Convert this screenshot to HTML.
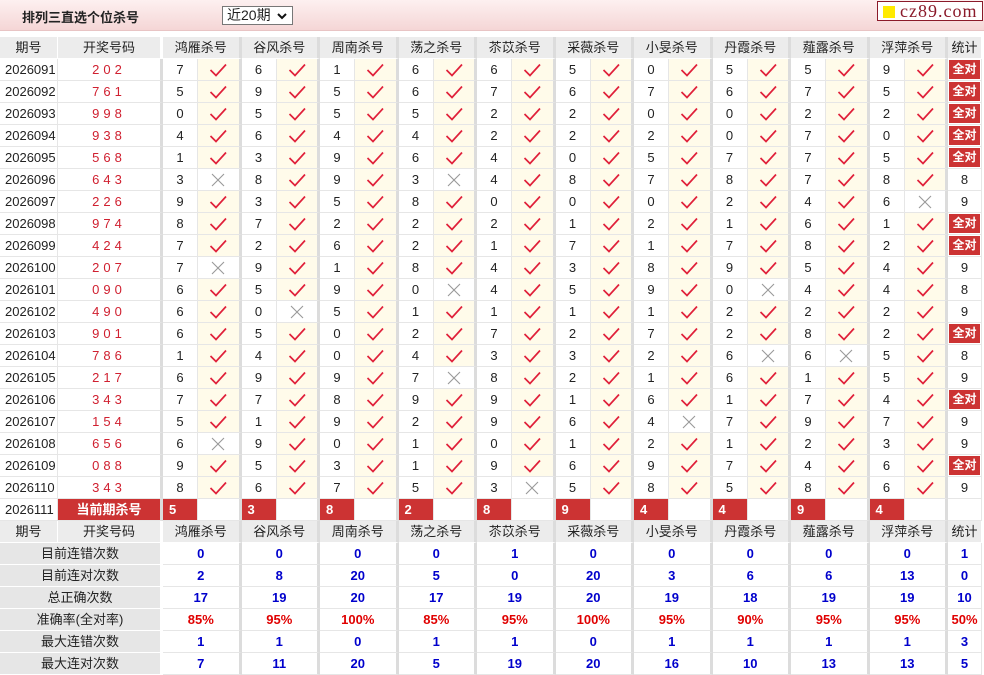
<!DOCTYPE html>
<html><head><meta charset="utf-8">
<style>
*{margin:0;padding:0;box-sizing:border-box}
body{width:984px;height:675px;overflow:hidden;background:#fff;font-family:"Liberation Sans","Noto Sans CJK SC",sans-serif;font-size:13px;color:#222;position:relative}
.top{position:absolute;left:0;top:0;width:984px;height:31px;background:linear-gradient(#fdf0f0,#f5d6d6);border-bottom:1px solid #e8c4c4}
.title{position:absolute;left:22px;top:7px;font-weight:bold;font-size:13px;color:#222}
.sel{position:absolute;left:222px;top:6px;width:71px;height:19px;border:1px solid #777;background:#fff;font-size:14px;padding-left:4px;line-height:17px}
.sel svg{position:absolute;right:5px;top:6px}
.logo{position:absolute;left:877px;top:1px;width:106px;height:20px;border:1px solid #8b1a2a;background:#fff;font-family:"Liberation Serif",serif;font-size:18px;color:#8b1a2a;line-height:18px;padding-left:22px;letter-spacing:1px}
.logo:before{content:"";position:absolute;left:5px;top:4px;width:12px;height:12px;background:#ffea00}
.tb{position:absolute;left:0;top:37px;width:984px}
.r{display:grid;grid-template-columns:58px 105px repeat(10,35px 43.5px) 34px;height:22px}
.r i{font-style:normal;display:block;height:22px;line-height:21px;text-align:center;border-right:1px solid #e6e6e6;border-bottom:1px solid #e6e6e6;overflow:hidden;white-space:nowrap}
.r i:first-child{text-align:left;padding-left:5px}
.r i.k{color:#d02030;letter-spacing:4px;border-right:3px solid #dcdcdc}
.r i.c,.r i.x{border-right:3px solid #dcdcdc}
.r i.c{background:#fffbea}
.r i svg{display:inline-block;vertical-align:middle;margin-top:-2px}
.h i{background:#ececec;border-color:#fff!important;border-right-width:1px}
.h i.g{grid-column:span 2;border-right:3px solid #dcdcdc!important;background:#ececec}
.h i:first-child{text-align:center;padding:0}
.q{background:#cc3333;color:#fff;font-weight:bold;font-size:12px;box-shadow:inset 0 0 0 1px #fff}
.cur i.kk{background:#cc3333;color:#fff;font-weight:bold;border-right:3px solid #dcdcdc}
.cur i.m{background:#cc3333;color:#fff;font-weight:bold;text-align:left;padding-left:6px}
.s i{color:#0000cc;font-weight:bold;grid-column:span 2;border-right:3px solid #dcdcdc}
.s i:first-child{grid-column:span 2;background:#e6e6e6;color:#222;font-weight:normal;text-align:center;padding:0;border-color:#fff}
.s i:last-child{grid-column:span 1;border-right:1px solid #e6e6e6}
.p i{color:#e00000}
</style></head><body>
<svg width="0" height="0" style="position:absolute"><defs>
<symbol id="v" viewBox="0 0 20 16"><polyline points="2.5,8 8,13.5 18,2.5" fill="none" stroke="#e0203a" stroke-width="1.7"/></symbol>
<symbol id="w" viewBox="0 0 16 16"><path d="M2 2L14 14M14 2L2 14" stroke="#999" stroke-width="1.1" fill="none"/></symbol>
</defs></svg>
<div class="top"><div class="title">排列三直选个位杀号</div><div class="sel">近20期<svg width="10" height="7"><polyline points="1,1 5,5 9,1" fill="none" stroke="#111" stroke-width="2"/></svg></div><div class="logo">cz89.com</div></div>
<div class="tb">
<div class="r h"><i>期号</i><i style="border-right:3px solid #dcdcdc">开奖号码</i><i class="g">鸿雁杀号</i><i class="g">谷风杀号</i><i class="g">周南杀号</i><i class="g">荡之杀号</i><i class="g">苶苡杀号</i><i class="g">采薇杀号</i><i class="g">小旻杀号</i><i class="g">丹霞杀号</i><i class="g">薤露杀号</i><i class="g">浮萍杀号</i><i>统计</i></div>

<div class="r"><i>2026091</i><i class="k">202</i><i>7</i><i class="c"><svg width="20" height="16"><use href="#v"/></svg></i><i>6</i><i class="c"><svg width="20" height="16"><use href="#v"/></svg></i><i>1</i><i class="c"><svg width="20" height="16"><use href="#v"/></svg></i><i>6</i><i class="c"><svg width="20" height="16"><use href="#v"/></svg></i><i>6</i><i class="c"><svg width="20" height="16"><use href="#v"/></svg></i><i>5</i><i class="c"><svg width="20" height="16"><use href="#v"/></svg></i><i>0</i><i class="c"><svg width="20" height="16"><use href="#v"/></svg></i><i>5</i><i class="c"><svg width="20" height="16"><use href="#v"/></svg></i><i>5</i><i class="c"><svg width="20" height="16"><use href="#v"/></svg></i><i>9</i><i class="c"><svg width="20" height="16"><use href="#v"/></svg></i><i class="q">全对</i></div>

<div class="r"><i>2026092</i><i class="k">761</i><i>5</i><i class="c"><svg width="20" height="16"><use href="#v"/></svg></i><i>9</i><i class="c"><svg width="20" height="16"><use href="#v"/></svg></i><i>5</i><i class="c"><svg width="20" height="16"><use href="#v"/></svg></i><i>6</i><i class="c"><svg width="20" height="16"><use href="#v"/></svg></i><i>7</i><i class="c"><svg width="20" height="16"><use href="#v"/></svg></i><i>6</i><i class="c"><svg width="20" height="16"><use href="#v"/></svg></i><i>7</i><i class="c"><svg width="20" height="16"><use href="#v"/></svg></i><i>6</i><i class="c"><svg width="20" height="16"><use href="#v"/></svg></i><i>7</i><i class="c"><svg width="20" height="16"><use href="#v"/></svg></i><i>5</i><i class="c"><svg width="20" height="16"><use href="#v"/></svg></i><i class="q">全对</i></div>

<div class="r"><i>2026093</i><i class="k">998</i><i>0</i><i class="c"><svg width="20" height="16"><use href="#v"/></svg></i><i>5</i><i class="c"><svg width="20" height="16"><use href="#v"/></svg></i><i>5</i><i class="c"><svg width="20" height="16"><use href="#v"/></svg></i><i>5</i><i class="c"><svg width="20" height="16"><use href="#v"/></svg></i><i>2</i><i class="c"><svg width="20" height="16"><use href="#v"/></svg></i><i>2</i><i class="c"><svg width="20" height="16"><use href="#v"/></svg></i><i>0</i><i class="c"><svg width="20" height="16"><use href="#v"/></svg></i><i>0</i><i class="c"><svg width="20" height="16"><use href="#v"/></svg></i><i>2</i><i class="c"><svg width="20" height="16"><use href="#v"/></svg></i><i>2</i><i class="c"><svg width="20" height="16"><use href="#v"/></svg></i><i class="q">全对</i></div>

<div class="r"><i>2026094</i><i class="k">938</i><i>4</i><i class="c"><svg width="20" height="16"><use href="#v"/></svg></i><i>6</i><i class="c"><svg width="20" height="16"><use href="#v"/></svg></i><i>4</i><i class="c"><svg width="20" height="16"><use href="#v"/></svg></i><i>4</i><i class="c"><svg width="20" height="16"><use href="#v"/></svg></i><i>2</i><i class="c"><svg width="20" height="16"><use href="#v"/></svg></i><i>2</i><i class="c"><svg width="20" height="16"><use href="#v"/></svg></i><i>2</i><i class="c"><svg width="20" height="16"><use href="#v"/></svg></i><i>0</i><i class="c"><svg width="20" height="16"><use href="#v"/></svg></i><i>7</i><i class="c"><svg width="20" height="16"><use href="#v"/></svg></i><i>0</i><i class="c"><svg width="20" height="16"><use href="#v"/></svg></i><i class="q">全对</i></div>

<div class="r"><i>2026095</i><i class="k">568</i><i>1</i><i class="c"><svg width="20" height="16"><use href="#v"/></svg></i><i>3</i><i class="c"><svg width="20" height="16"><use href="#v"/></svg></i><i>9</i><i class="c"><svg width="20" height="16"><use href="#v"/></svg></i><i>6</i><i class="c"><svg width="20" height="16"><use href="#v"/></svg></i><i>4</i><i class="c"><svg width="20" height="16"><use href="#v"/></svg></i><i>0</i><i class="c"><svg width="20" height="16"><use href="#v"/></svg></i><i>5</i><i class="c"><svg width="20" height="16"><use href="#v"/></svg></i><i>7</i><i class="c"><svg width="20" height="16"><use href="#v"/></svg></i><i>7</i><i class="c"><svg width="20" height="16"><use href="#v"/></svg></i><i>5</i><i class="c"><svg width="20" height="16"><use href="#v"/></svg></i><i class="q">全对</i></div>

<div class="r"><i>2026096</i><i class="k">643</i><i>3</i><i class="x"><svg width="16" height="16"><use href="#w"/></svg></i><i>8</i><i class="c"><svg width="20" height="16"><use href="#v"/></svg></i><i>9</i><i class="c"><svg width="20" height="16"><use href="#v"/></svg></i><i>3</i><i class="x"><svg width="16" height="16"><use href="#w"/></svg></i><i>4</i><i class="c"><svg width="20" height="16"><use href="#v"/></svg></i><i>8</i><i class="c"><svg width="20" height="16"><use href="#v"/></svg></i><i>7</i><i class="c"><svg width="20" height="16"><use href="#v"/></svg></i><i>8</i><i class="c"><svg width="20" height="16"><use href="#v"/></svg></i><i>7</i><i class="c"><svg width="20" height="16"><use href="#v"/></svg></i><i>8</i><i class="c"><svg width="20" height="16"><use href="#v"/></svg></i><i>8</i></div>

<div class="r"><i>2026097</i><i class="k">226</i><i>9</i><i class="c"><svg width="20" height="16"><use href="#v"/></svg></i><i>3</i><i class="c"><svg width="20" height="16"><use href="#v"/></svg></i><i>5</i><i class="c"><svg width="20" height="16"><use href="#v"/></svg></i><i>8</i><i class="c"><svg width="20" height="16"><use href="#v"/></svg></i><i>0</i><i class="c"><svg width="20" height="16"><use href="#v"/></svg></i><i>0</i><i class="c"><svg width="20" height="16"><use href="#v"/></svg></i><i>0</i><i class="c"><svg width="20" height="16"><use href="#v"/></svg></i><i>2</i><i class="c"><svg width="20" height="16"><use href="#v"/></svg></i><i>4</i><i class="c"><svg width="20" height="16"><use href="#v"/></svg></i><i>6</i><i class="x"><svg width="16" height="16"><use href="#w"/></svg></i><i>9</i></div>

<div class="r"><i>2026098</i><i class="k">974</i><i>8</i><i class="c"><svg width="20" height="16"><use href="#v"/></svg></i><i>7</i><i class="c"><svg width="20" height="16"><use href="#v"/></svg></i><i>2</i><i class="c"><svg width="20" height="16"><use href="#v"/></svg></i><i>2</i><i class="c"><svg width="20" height="16"><use href="#v"/></svg></i><i>2</i><i class="c"><svg width="20" height="16"><use href="#v"/></svg></i><i>1</i><i class="c"><svg width="20" height="16"><use href="#v"/></svg></i><i>2</i><i class="c"><svg width="20" height="16"><use href="#v"/></svg></i><i>1</i><i class="c"><svg width="20" height="16"><use href="#v"/></svg></i><i>6</i><i class="c"><svg width="20" height="16"><use href="#v"/></svg></i><i>1</i><i class="c"><svg width="20" height="16"><use href="#v"/></svg></i><i class="q">全对</i></div>

<div class="r"><i>2026099</i><i class="k">424</i><i>7</i><i class="c"><svg width="20" height="16"><use href="#v"/></svg></i><i>2</i><i class="c"><svg width="20" height="16"><use href="#v"/></svg></i><i>6</i><i class="c"><svg width="20" height="16"><use href="#v"/></svg></i><i>2</i><i class="c"><svg width="20" height="16"><use href="#v"/></svg></i><i>1</i><i class="c"><svg width="20" height="16"><use href="#v"/></svg></i><i>7</i><i class="c"><svg width="20" height="16"><use href="#v"/></svg></i><i>1</i><i class="c"><svg width="20" height="16"><use href="#v"/></svg></i><i>7</i><i class="c"><svg width="20" height="16"><use href="#v"/></svg></i><i>8</i><i class="c"><svg width="20" height="16"><use href="#v"/></svg></i><i>2</i><i class="c"><svg width="20" height="16"><use href="#v"/></svg></i><i class="q">全对</i></div>

<div class="r"><i>2026100</i><i class="k">207</i><i>7</i><i class="x"><svg width="16" height="16"><use href="#w"/></svg></i><i>9</i><i class="c"><svg width="20" height="16"><use href="#v"/></svg></i><i>1</i><i class="c"><svg width="20" height="16"><use href="#v"/></svg></i><i>8</i><i class="c"><svg width="20" height="16"><use href="#v"/></svg></i><i>4</i><i class="c"><svg width="20" height="16"><use href="#v"/></svg></i><i>3</i><i class="c"><svg width="20" height="16"><use href="#v"/></svg></i><i>8</i><i class="c"><svg width="20" height="16"><use href="#v"/></svg></i><i>9</i><i class="c"><svg width="20" height="16"><use href="#v"/></svg></i><i>5</i><i class="c"><svg width="20" height="16"><use href="#v"/></svg></i><i>4</i><i class="c"><svg width="20" height="16"><use href="#v"/></svg></i><i>9</i></div>

<div class="r"><i>2026101</i><i class="k">090</i><i>6</i><i class="c"><svg width="20" height="16"><use href="#v"/></svg></i><i>5</i><i class="c"><svg width="20" height="16"><use href="#v"/></svg></i><i>9</i><i class="c"><svg width="20" height="16"><use href="#v"/></svg></i><i>0</i><i class="x"><svg width="16" height="16"><use href="#w"/></svg></i><i>4</i><i class="c"><svg width="20" height="16"><use href="#v"/></svg></i><i>5</i><i class="c"><svg width="20" height="16"><use href="#v"/></svg></i><i>9</i><i class="c"><svg width="20" height="16"><use href="#v"/></svg></i><i>0</i><i class="x"><svg width="16" height="16"><use href="#w"/></svg></i><i>4</i><i class="c"><svg width="20" height="16"><use href="#v"/></svg></i><i>4</i><i class="c"><svg width="20" height="16"><use href="#v"/></svg></i><i>8</i></div>

<div class="r"><i>2026102</i><i class="k">490</i><i>6</i><i class="c"><svg width="20" height="16"><use href="#v"/></svg></i><i>0</i><i class="x"><svg width="16" height="16"><use href="#w"/></svg></i><i>5</i><i class="c"><svg width="20" height="16"><use href="#v"/></svg></i><i>1</i><i class="c"><svg width="20" height="16"><use href="#v"/></svg></i><i>1</i><i class="c"><svg width="20" height="16"><use href="#v"/></svg></i><i>1</i><i class="c"><svg width="20" height="16"><use href="#v"/></svg></i><i>1</i><i class="c"><svg width="20" height="16"><use href="#v"/></svg></i><i>2</i><i class="c"><svg width="20" height="16"><use href="#v"/></svg></i><i>2</i><i class="c"><svg width="20" height="16"><use href="#v"/></svg></i><i>2</i><i class="c"><svg width="20" height="16"><use href="#v"/></svg></i><i>9</i></div>

<div class="r"><i>2026103</i><i class="k">901</i><i>6</i><i class="c"><svg width="20" height="16"><use href="#v"/></svg></i><i>5</i><i class="c"><svg width="20" height="16"><use href="#v"/></svg></i><i>0</i><i class="c"><svg width="20" height="16"><use href="#v"/></svg></i><i>2</i><i class="c"><svg width="20" height="16"><use href="#v"/></svg></i><i>7</i><i class="c"><svg width="20" height="16"><use href="#v"/></svg></i><i>2</i><i class="c"><svg width="20" height="16"><use href="#v"/></svg></i><i>7</i><i class="c"><svg width="20" height="16"><use href="#v"/></svg></i><i>2</i><i class="c"><svg width="20" height="16"><use href="#v"/></svg></i><i>8</i><i class="c"><svg width="20" height="16"><use href="#v"/></svg></i><i>2</i><i class="c"><svg width="20" height="16"><use href="#v"/></svg></i><i class="q">全对</i></div>

<div class="r"><i>2026104</i><i class="k">786</i><i>1</i><i class="c"><svg width="20" height="16"><use href="#v"/></svg></i><i>4</i><i class="c"><svg width="20" height="16"><use href="#v"/></svg></i><i>0</i><i class="c"><svg width="20" height="16"><use href="#v"/></svg></i><i>4</i><i class="c"><svg width="20" height="16"><use href="#v"/></svg></i><i>3</i><i class="c"><svg width="20" height="16"><use href="#v"/></svg></i><i>3</i><i class="c"><svg width="20" height="16"><use href="#v"/></svg></i><i>2</i><i class="c"><svg width="20" height="16"><use href="#v"/></svg></i><i>6</i><i class="x"><svg width="16" height="16"><use href="#w"/></svg></i><i>6</i><i class="x"><svg width="16" height="16"><use href="#w"/></svg></i><i>5</i><i class="c"><svg width="20" height="16"><use href="#v"/></svg></i><i>8</i></div>

<div class="r"><i>2026105</i><i class="k">217</i><i>6</i><i class="c"><svg width="20" height="16"><use href="#v"/></svg></i><i>9</i><i class="c"><svg width="20" height="16"><use href="#v"/></svg></i><i>9</i><i class="c"><svg width="20" height="16"><use href="#v"/></svg></i><i>7</i><i class="x"><svg width="16" height="16"><use href="#w"/></svg></i><i>8</i><i class="c"><svg width="20" height="16"><use href="#v"/></svg></i><i>2</i><i class="c"><svg width="20" height="16"><use href="#v"/></svg></i><i>1</i><i class="c"><svg width="20" height="16"><use href="#v"/></svg></i><i>6</i><i class="c"><svg width="20" height="16"><use href="#v"/></svg></i><i>1</i><i class="c"><svg width="20" height="16"><use href="#v"/></svg></i><i>5</i><i class="c"><svg width="20" height="16"><use href="#v"/></svg></i><i>9</i></div>

<div class="r"><i>2026106</i><i class="k">343</i><i>7</i><i class="c"><svg width="20" height="16"><use href="#v"/></svg></i><i>7</i><i class="c"><svg width="20" height="16"><use href="#v"/></svg></i><i>8</i><i class="c"><svg width="20" height="16"><use href="#v"/></svg></i><i>9</i><i class="c"><svg width="20" height="16"><use href="#v"/></svg></i><i>9</i><i class="c"><svg width="20" height="16"><use href="#v"/></svg></i><i>1</i><i class="c"><svg width="20" height="16"><use href="#v"/></svg></i><i>6</i><i class="c"><svg width="20" height="16"><use href="#v"/></svg></i><i>1</i><i class="c"><svg width="20" height="16"><use href="#v"/></svg></i><i>7</i><i class="c"><svg width="20" height="16"><use href="#v"/></svg></i><i>4</i><i class="c"><svg width="20" height="16"><use href="#v"/></svg></i><i class="q">全对</i></div>

<div class="r"><i>2026107</i><i class="k">154</i><i>5</i><i class="c"><svg width="20" height="16"><use href="#v"/></svg></i><i>1</i><i class="c"><svg width="20" height="16"><use href="#v"/></svg></i><i>9</i><i class="c"><svg width="20" height="16"><use href="#v"/></svg></i><i>2</i><i class="c"><svg width="20" height="16"><use href="#v"/></svg></i><i>9</i><i class="c"><svg width="20" height="16"><use href="#v"/></svg></i><i>6</i><i class="c"><svg width="20" height="16"><use href="#v"/></svg></i><i>4</i><i class="x"><svg width="16" height="16"><use href="#w"/></svg></i><i>7</i><i class="c"><svg width="20" height="16"><use href="#v"/></svg></i><i>9</i><i class="c"><svg width="20" height="16"><use href="#v"/></svg></i><i>7</i><i class="c"><svg width="20" height="16"><use href="#v"/></svg></i><i>9</i></div>

<div class="r"><i>2026108</i><i class="k">656</i><i>6</i><i class="x"><svg width="16" height="16"><use href="#w"/></svg></i><i>9</i><i class="c"><svg width="20" height="16"><use href="#v"/></svg></i><i>0</i><i class="c"><svg width="20" height="16"><use href="#v"/></svg></i><i>1</i><i class="c"><svg width="20" height="16"><use href="#v"/></svg></i><i>0</i><i class="c"><svg width="20" height="16"><use href="#v"/></svg></i><i>1</i><i class="c"><svg width="20" height="16"><use href="#v"/></svg></i><i>2</i><i class="c"><svg width="20" height="16"><use href="#v"/></svg></i><i>1</i><i class="c"><svg width="20" height="16"><use href="#v"/></svg></i><i>2</i><i class="c"><svg width="20" height="16"><use href="#v"/></svg></i><i>3</i><i class="c"><svg width="20" height="16"><use href="#v"/></svg></i><i>9</i></div>

<div class="r"><i>2026109</i><i class="k">088</i><i>9</i><i class="c"><svg width="20" height="16"><use href="#v"/></svg></i><i>5</i><i class="c"><svg width="20" height="16"><use href="#v"/></svg></i><i>3</i><i class="c"><svg width="20" height="16"><use href="#v"/></svg></i><i>1</i><i class="c"><svg width="20" height="16"><use href="#v"/></svg></i><i>9</i><i class="c"><svg width="20" height="16"><use href="#v"/></svg></i><i>6</i><i class="c"><svg width="20" height="16"><use href="#v"/></svg></i><i>9</i><i class="c"><svg width="20" height="16"><use href="#v"/></svg></i><i>7</i><i class="c"><svg width="20" height="16"><use href="#v"/></svg></i><i>4</i><i class="c"><svg width="20" height="16"><use href="#v"/></svg></i><i>6</i><i class="c"><svg width="20" height="16"><use href="#v"/></svg></i><i class="q">全对</i></div>

<div class="r"><i>2026110</i><i class="k">343</i><i>8</i><i class="c"><svg width="20" height="16"><use href="#v"/></svg></i><i>6</i><i class="c"><svg width="20" height="16"><use href="#v"/></svg></i><i>7</i><i class="c"><svg width="20" height="16"><use href="#v"/></svg></i><i>5</i><i class="c"><svg width="20" height="16"><use href="#v"/></svg></i><i>3</i><i class="x"><svg width="16" height="16"><use href="#w"/></svg></i><i>5</i><i class="c"><svg width="20" height="16"><use href="#v"/></svg></i><i>8</i><i class="c"><svg width="20" height="16"><use href="#v"/></svg></i><i>5</i><i class="c"><svg width="20" height="16"><use href="#v"/></svg></i><i>8</i><i class="c"><svg width="20" height="16"><use href="#v"/></svg></i><i>6</i><i class="c"><svg width="20" height="16"><use href="#v"/></svg></i><i>9</i></div>

<div class="r cur"><i>2026111</i><i class="kk">当前期杀号</i><i class="m">5</i><i class="x"></i><i class="m">3</i><i class="x"></i><i class="m">8</i><i class="x"></i><i class="m">2</i><i class="x"></i><i class="m">8</i><i class="x"></i><i class="m">9</i><i class="x"></i><i class="m">4</i><i class="x"></i><i class="m">4</i><i class="x"></i><i class="m">9</i><i class="x"></i><i class="m">4</i><i class="x"></i><i></i></div>

<div class="r h"><i>期号</i><i style="border-right:3px solid #dcdcdc">开奖号码</i><i class="g">鸿雁杀号</i><i class="g">谷风杀号</i><i class="g">周南杀号</i><i class="g">荡之杀号</i><i class="g">苶苡杀号</i><i class="g">采薇杀号</i><i class="g">小旻杀号</i><i class="g">丹霞杀号</i><i class="g">薤露杀号</i><i class="g">浮萍杀号</i><i>统计</i></div>

<div class="r s"><i>目前连错次数</i><i>0</i><i>0</i><i>0</i><i>0</i><i>1</i><i>0</i><i>0</i><i>0</i><i>0</i><i>0</i><i>1</i></div>
<div class="r s"><i>目前连对次数</i><i>2</i><i>8</i><i>20</i><i>5</i><i>0</i><i>20</i><i>3</i><i>6</i><i>6</i><i>13</i><i>0</i></div>
<div class="r s"><i>总正确次数</i><i>17</i><i>19</i><i>20</i><i>17</i><i>19</i><i>20</i><i>19</i><i>18</i><i>19</i><i>19</i><i>10</i></div>
<div class="r s p"><i>准确率(全对率)</i><i>85%</i><i>95%</i><i>100%</i><i>85%</i><i>95%</i><i>100%</i><i>95%</i><i>90%</i><i>95%</i><i>95%</i><i>50%</i></div>
<div class="r s"><i>最大连错次数</i><i>1</i><i>1</i><i>0</i><i>1</i><i>1</i><i>0</i><i>1</i><i>1</i><i>1</i><i>1</i><i>3</i></div>
<div class="r s"><i>最大连对次数</i><i>7</i><i>11</i><i>20</i><i>5</i><i>19</i><i>20</i><i>16</i><i>10</i><i>13</i><i>13</i><i>5</i></div>
</div>
</body></html>
